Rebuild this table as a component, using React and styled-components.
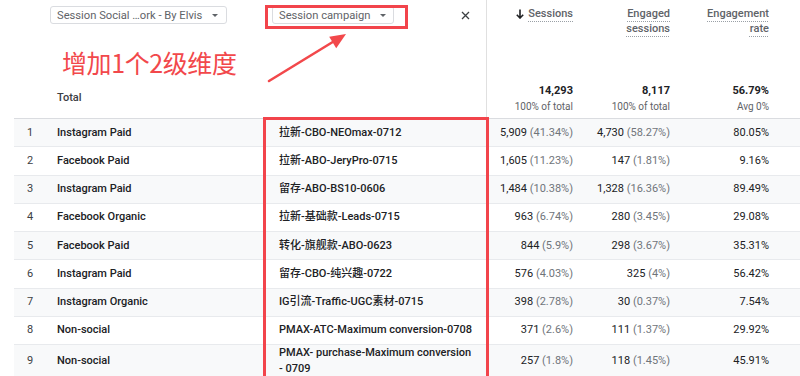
import React from 'react';
import styled, { createGlobalStyle } from 'styled-components';

const Global = createGlobalStyle`
  html, body { margin: 0; padding: 0; background: #fff; }
  body { font-family: Roboto, "Noto Sans CJK SC", "Noto Sans", sans-serif; color: #202124; }
  #root { width: 800px; height: 376px; }
`;

const COLS = '36px 215px 222px 93px 97px 99px 1fr';

const Page = styled.div`
  position: relative;
  width: 800px;
  height: 376px;
  overflow: hidden;
  padding-left: 14px;
  box-sizing: border-box;
  font-size: 11px;
`;

const HeaderRow = styled.div`
  display: grid;
  grid-template-columns: ${COLS};
  height: 119px;
  box-sizing: border-box;
  border-bottom: 1px solid #dadce0;
`;

const HeadCell = styled.div`
  display: flex;
  flex-direction: column;
  justify-content: space-between;
  align-items: ${p => (p.$right ? 'flex-end' : 'stretch')};
  padding: 6px ${p => (p.$right ? '7px' : '0')} ${p => (p.$right ? '3px' : '12px')} ${p => p.$padLeft || '0'};
  box-sizing: border-box;
  ${p => p.$divider && 'border-right: 1px solid #e0e0e0;'}
`;

const HeadTop = styled.div`
  display: flex;
  align-items: center;
  justify-content: space-between;
  padding-right: ${p => p.$padRight || '0'};
`;

const Dropdown = styled.div`
  display: inline-flex;
  align-items: center;
  gap: 10px;
  height: 18px;
  box-sizing: border-box;
  padding: 0 11px 0 6px;
  border: 1px solid #dadce0;
  border-radius: 3px;
  color: #5f6368;
  font-size: 11.2px;
  white-space: nowrap;
  width: ${p => p.$width};
`;

const Caret = styled.span`
  width: 0;
  height: 0;
  border-left: 3px solid transparent;
  border-right: 3px solid transparent;
  border-top: 3.5px solid #5f6368;
  margin-left: auto;
`;

const TotalLabel = styled.div`
  padding-left: 7px;
  line-height: 16px;
  font-weight: 500;
  color: #3c4043;
`;

const MetricLabel = styled.div`
  display: flex;
  align-items: flex-start;
  gap: 4px;
  text-align: right;
  color: #5f6368;
  font-weight: 500;
  line-height: 15px;
`;

const LabelText = styled.span`
  max-width: 64px;
  text-decoration: underline dotted #9aa0a6;
  text-decoration-thickness: 1px;
  text-underline-offset: 4px;
`;

const TotalBlock = styled.div`
  text-align: right;
  line-height: 16px;
`;

const TotalValue = styled.div`
  font-weight: 700;
  color: #202124;
`;

const TotalSub = styled.div`
  font-size: 10px;
  color: #5f6368;
`;

const Row = styled.div`
  display: grid;
  grid-template-columns: ${COLS};
  min-height: 28.25px;
  box-sizing: border-box;
  align-items: center;
  line-height: 16px;
  background: ${p => (p.$odd ? '#f8f9fa' : '#fff')};
  border-bottom: 1px solid #e8eaed;
`;

const IndexCell = styled.div`
  padding-left: 13px;
  color: #3c4043;
`;

const DimCell = styled.div`
  padding-left: ${p => p.$pad};
  font-weight: 500;
  color: #202124;
`;

const NoWrap = styled.span`
  white-space: nowrap;
`;

const NumCell = styled.div`
  text-align: right;
  padding-right: 7px;
  color: #202124;
  white-space: nowrap;
`;

const Pct = styled.span`
  color: #70757a;
`;

const RedBox = styled.div`
  position: absolute;
  left: ${p => p.$x}px;
  top: ${p => p.$y}px;
  width: ${p => p.$w}px;
  height: ${p => p.$h}px;
  border: 3px solid #f2444b;
  box-sizing: border-box;
  pointer-events: none;
`;

const Note = styled.div`
  position: absolute;
  left: 62px;
  top: 47px;
  font-family: "Noto Sans CJK SC", sans-serif;
  font-size: 25px;
  line-height: 30px;
  color: #f2484b;
  letter-spacing: -0.4px;
  white-space: nowrap;
`;

const ArrowSvg = styled.svg`
  position: absolute;
  left: 260px;
  top: 28px;
  pointer-events: none;
`;

const rows = [
  ['Instagram Paid', '拉新-CBO-NEOmax-0712', '5,909', '41.34%', '4,730', '58.27%', '80.05%'],
  ['Facebook Paid', '拉新-ABO-JeryPro-0715', '1,605', '11.23%', '147', '1.81%', '9.16%'],
  ['Instagram Paid', '留存-ABO-BS10-0606', '1,484', '10.38%', '1,328', '16.36%', '89.49%'],
  ['Facebook Organic', '拉新-基础款-Leads-0715', '963', '6.74%', '280', '3.45%', '29.08%'],
  ['Facebook Paid', '转化-旗舰款-ABO-0623', '844', '5.9%', '298', '3.67%', '35.31%'],
  ['Instagram Paid', '留存-CBO-纯兴趣-0722', '576', '4.03%', '325', '4%', '56.42%'],
  ['Instagram Organic', 'IG引流-Traffic-UGC素材-0715', '398', '2.78%', '30', '0.37%', '7.54%'],
  ['Non-social', 'PMAX-ATC-Maximum conversion-0708', '371', '2.6%', '111', '1.37%', '29.92%'],
  ['Non-social', ['PMAX- purchase-Maximum conversion ', '- 0709'], '257', '1.8%', '118', '1.45%', '45.91%'],
];

const SortArrow = () => (
  <svg width="8" height="10" viewBox="0 0 8 10" style={{ marginTop: 3 }}>
    <path d="M4 0.5V9M0.8 5.8L4 9L7.2 5.8" stroke="#202124" strokeWidth="1.6" fill="none" />
  </svg>
);

const CloseIcon = () => (
  <svg width="9" height="9" viewBox="0 0 9 9">
    <path d="M1 1L8 8M8 1L1 8" stroke="#3c4043" strokeWidth="1.3" />
  </svg>
);

const Campaign = ({ value }) =>
  Array.isArray(value) ? (
    <>
      {value[0]}
      <NoWrap>{value[1]}</NoWrap>
    </>
  ) : (
    value
  );

export default function App() {
  return (
    <Page>
      <Global />
      <HeaderRow>
        <HeadCell />
        <HeadCell>
          <HeadTop>
            <Dropdown $width="177px">
              Session Social …ork - By Elvis
              <Caret />
            </Dropdown>
          </HeadTop>
          <TotalLabel>Total</TotalLabel>
        </HeadCell>
        <HeadCell $divider $padLeft="7px">
          <HeadTop $padRight="16px">
            <Dropdown $width="122px">
              Session campaign
              <Caret />
            </Dropdown>
            <CloseIcon />
          </HeadTop>
        </HeadCell>
        <HeadCell $right>
          <MetricLabel>
            <SortArrow />
            <LabelText>Sessions</LabelText>
          </MetricLabel>
          <TotalBlock>
            <TotalValue>14,293</TotalValue>
            <TotalSub>100% of total</TotalSub>
          </TotalBlock>
        </HeadCell>
        <HeadCell $right>
          <MetricLabel>
            <LabelText>Engaged sessions</LabelText>
          </MetricLabel>
          <TotalBlock>
            <TotalValue>8,117</TotalValue>
            <TotalSub>100% of total</TotalSub>
          </TotalBlock>
        </HeadCell>
        <HeadCell $right>
          <MetricLabel>
            <LabelText>Engagement rate</LabelText>
          </MetricLabel>
          <TotalBlock>
            <TotalValue>56.79%</TotalValue>
            <TotalSub>Avg 0%</TotalSub>
          </TotalBlock>
        </HeadCell>
        <HeadCell />
      </HeaderRow>

      {rows.map((r, i) => (
        <Row key={i} $odd={i % 2 === 0}>
          <IndexCell>{i + 1}</IndexCell>
          <DimCell $pad="7px">{r[0]}</DimCell>
          <DimCell $pad="14px">
            <Campaign value={r[1]} />
          </DimCell>
          <NumCell>
            {r[2]} <Pct>({r[3]})</Pct>
          </NumCell>
          <NumCell>
            {r[4]} <Pct>({r[5]})</Pct>
          </NumCell>
          <NumCell>{r[6]}</NumCell>
          <div />
        </Row>
      ))}

      <Note>增加1个2级维度</Note>
      <ArrowSvg width="95" height="60" viewBox="0 0 95 60">
        <path d="M9 53 L76 12" stroke="#f2484b" strokeWidth="2.6" strokeLinecap="round" />
        <path d="M86 6 L76.2 20.2 L69.2 8.8 Z" fill="#f2484b" />
      </ArrowSvg>
      <RedBox $x={265} $y={5} $w={143} $h={24} />
      <RedBox $x={263} $y={117} $w={226} $h={270} />
    </Page>
  );
}
